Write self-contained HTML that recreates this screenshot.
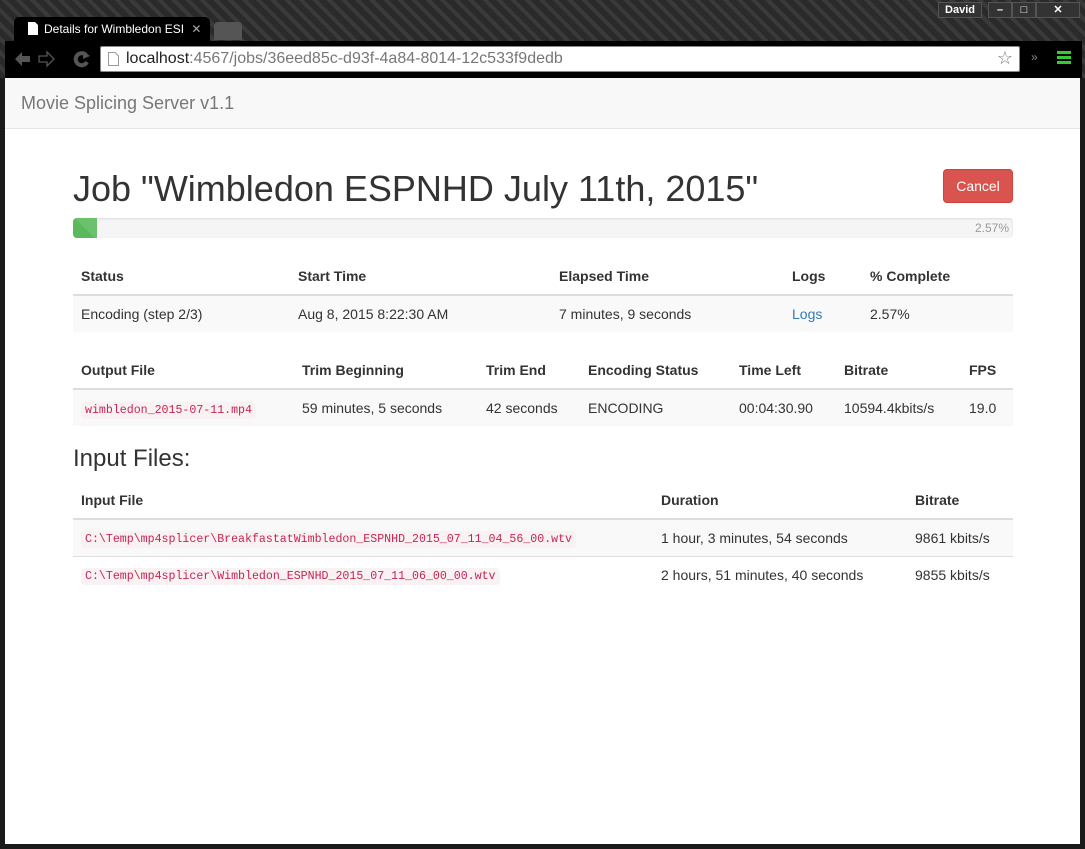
<!DOCTYPE html>
<html><head><meta charset="utf-8"><style>
*{box-sizing:border-box;margin:0;padding:0}
body{width:1085px;height:849px;overflow:hidden;background:#1a1a1a;font-family:"Liberation Sans",Arial,sans-serif;font-size:14px;color:#333;position:relative}
.chrome{position:absolute;left:0;top:0;width:1085px;height:78px;background:repeating-linear-gradient(45deg,#2a2a2a 0 6px,#3a3a3a 6px 10px)}
.tab{position:absolute;left:14px;top:17px;width:196px;height:25px;background:#000;border-radius:5px 5px 0 0;color:#fff;font-size:12px;padding:5px 0 0 30px}
.tab2{position:absolute;left:214px;top:22px;width:28px;height:18px;background:#555;border-radius:4px 4px 0 0}
.bar{position:absolute;left:5px;top:41px;width:1077px;height:37px;background:#000}
.omni{position:absolute;left:100px;top:46px;width:920px;height:26px;background:#fff;border:1px solid #888;border-radius:2px;font-size:16px;padding:3px 0 0 25px;color:#777}
.omni b{font-weight:normal;color:#222}
.ctl{position:absolute;top:2px;height:16px;color:#fff;font-size:11px;font-weight:bold;border:1px solid #555;background:#333;text-align:center;line-height:14px}
.page{position:absolute;left:5px;top:78px;width:1075px;height:766px;background:#fff}
.nav{height:51px;background:#f8f8f8;border-bottom:1px solid #e7e7e7;color:#777;font-size:18px;padding:15px 0 0 16px}
.c{position:absolute;left:68px;width:940px}
h1{position:absolute;left:68px;top:90px;font-size:36px;font-weight:normal;color:#333}
.btn{position:absolute;left:938px;top:91px;width:70px;height:34px;background:#d9534f;border:1px solid #d43f3a;border-radius:4px;color:#fff;font-size:14px;text-align:center;line-height:32px}
.prog{top:140px;height:20px;background:#f5f5f5;border-radius:4px;box-shadow:inset 0 1px 2px rgba(0,0,0,.1);font-size:12px;color:#999;text-align:right;padding:3px 4px 0 0}
.prog i{position:absolute;left:0;top:0;width:24px;height:20px;background:linear-gradient(45deg,#5cb85c 0 50%,#6cc26c 50% 100%);border-radius:4px 0 0 4px}
table{border-collapse:collapse;width:940px;table-layout:fixed}
th{text-align:left;font-weight:bold;padding:8px;height:37px;border-bottom:2px solid #ddd}
td{padding:8px;height:37px;border-top:1px solid #ddd}
tbody tr:nth-child(odd){background:#f9f9f9}
code{font-family:"Liberation Mono",monospace;font-size:11.6px;color:#c7254e;background:#f9f2f4;padding:2px 4px;border-radius:4px}
h3{position:absolute;left:68px;top:367px;font-size:24px;font-weight:normal}
a{color:#337ab7;text-decoration:none}
</style></head><body>
<div class="chrome"></div>
<div class="tab"><svg style="position:absolute;left:14px;top:5px" width="10" height="13"><path d="M0 0H7L10 3V13H0Z" fill="#fff"/></svg>Details for Wimbledon ESI <span style="color:#aaa;margin-left:4px">✕</span></div>
<div class="tab2"></div>
<div class="ctl" style="left:938px;width:44px">David</div>
<div class="ctl" style="left:988px;width:24px">–</div>
<div class="ctl" style="left:1012px;width:24px">□</div>
<div class="ctl" style="left:1036px;width:44px">✕</div>
<div class="bar">
<svg style="position:absolute;left:8px;top:9px" width="80" height="18">
<path d="M2 9L9 2V6H17V12H9V16Z" fill="#555"/>
<path d="M41 9L34 2V6H26V12H34V16Z" fill="none" stroke="#555" stroke-width="1.3"/>
<path d="M73 5A6 6 0 1 0 74 12" fill="none" stroke="#555" stroke-width="4"/><path d="M70 1L77 6L70 9Z" fill="#555"/>
</svg>
<span style="position:absolute;left:1026px;top:9px;color:#888;font-size:12px">»</span><span style="position:absolute;left:1052px;top:10px;width:14px;height:14px;background:repeating-linear-gradient(#3c3 0 3px,#000 3px 5px)"></span></div>
<div class="omni"><svg style="position:absolute;left:7px;top:5px" width="11" height="14"><path d="M0.5 0.5H7L10.5 4V13.5H0.5Z" fill="#fff" stroke="#999"/></svg><b>localhost</b>:4567/jobs/36eed85c-d93f-4a84-8014-12c533f9dedb<span style="position:absolute;right:6px;top:1px;color:#777;font-size:18px">☆</span></div>
<div class="page">
<div class="nav">Movie Splicing Server v1.1</div>
<h1>Job "Wimbledon ESPNHD July 11th, 2015"</h1>
<div class="btn">Cancel</div>
<div class="c prog"><i></i>2.57%</div>
<div class="c" style="top:180px"><table>
<colgroup><col style="width:217px"><col style="width:261px"><col style="width:233px"><col style="width:78px"><col></colgroup>
<thead><tr><th>Status</th><th>Start Time</th><th>Elapsed Time</th><th>Logs</th><th>% Complete</th></tr></thead>
<tbody><tr><td>Encoding (step 2/3)</td><td>Aug 8, 2015 8:22:30 AM</td><td>7 minutes, 9 seconds</td><td><a>Logs</a></td><td>2.57%</td></tr></tbody></table></div>
<div class="c" style="top:274px"><table>
<colgroup><col style="width:221px"><col style="width:184px"><col style="width:102px"><col style="width:151px"><col style="width:105px"><col style="width:125px"><col></colgroup>
<thead><tr><th>Output File</th><th>Trim Beginning</th><th>Trim End</th><th>Encoding Status</th><th>Time Left</th><th>Bitrate</th><th>FPS</th></tr></thead>
<tbody><tr><td><code>wimbledon_2015-07-11.mp4</code></td><td>59 minutes, 5 seconds</td><td>42 seconds</td><td>ENCODING</td><td>00:04:30.90</td><td>10594.4kbits/s</td><td>19.0</td></tr></tbody></table></div>
<h3>Input Files:</h3>
<div class="c" style="top:404px"><table>
<colgroup><col style="width:580px"><col style="width:254px"><col></colgroup>
<thead><tr><th>Input File</th><th>Duration</th><th>Bitrate</th></tr></thead>
<tbody><tr><td><code>C:\Temp\mp4splicer\BreakfastatWimbledon_ESPNHD_2015_07_11_04_56_00.wtv</code></td><td>1 hour, 3 minutes, 54 seconds</td><td>9861 kbits/s</td></tr>
<tr><td><code>C:\Temp\mp4splicer\Wimbledon_ESPNHD_2015_07_11_06_00_00.wtv</code></td><td>2 hours, 51 minutes, 40 seconds</td><td>9855 kbits/s</td></tr></tbody></table></div>
</div>
</body></html>
